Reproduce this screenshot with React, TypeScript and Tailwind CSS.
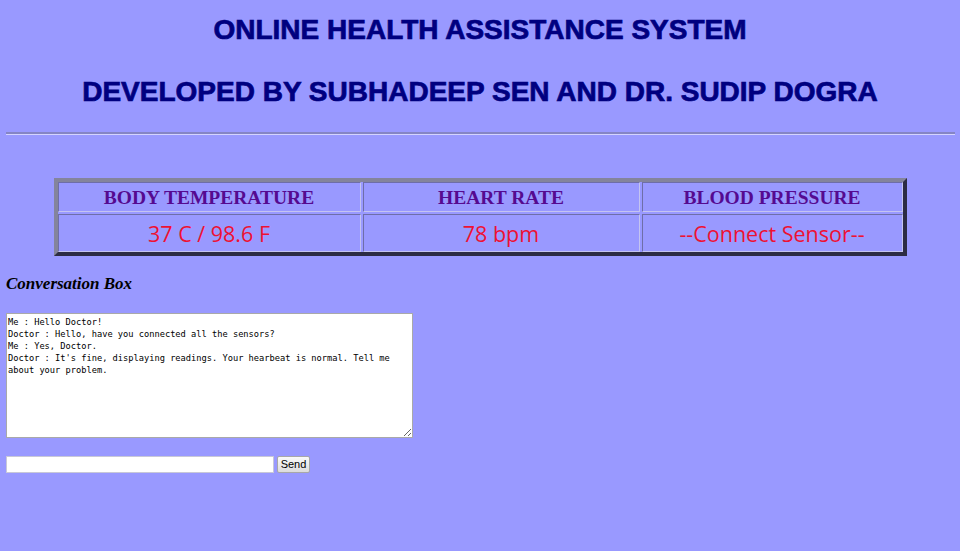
import React from "react";

const convo = `Me : Hello Doctor!
Doctor : Hello, have you connected all the sensors?
Me : Yes, Doctor.
Doctor : It's fine, displaying readings. Your hearbeat is normal. Tell me about your problem.`;

const cellBase =
  "flex items-center justify-center border border-t-[#6e6ea8] border-l-[#6e6ea8] border-b-[#c4c4f0] border-r-[#c4c4f0]";

export default function App() {
  return (
    <div className="min-h-[551px] w-[960px] bg-[#9999ff] px-[6px] overflow-hidden">
      <div
        className="pt-[14px] text-center text-[28px] leading-[32px] font-bold text-[#000080] [-webkit-text-stroke:0.7px_#000080]"
        style={{ fontFamily: '"Liberation Sans", Arial, sans-serif' }}
      >
        <div>ONLINE HEALTH ASSISTANCE SYSTEM</div>
        <div className="mt-[30px]">DEVELOPED BY SUBHADEEP SEN AND DR. SUDIP DOGRA</div>
      </div>
      <div className="mt-[24px] mr-[-1px] h-[3px] border-t-2 border-b border-t-[#8585c4] border-b-[#d4d4ff]" />

      <div className="mt-[43px] mx-auto w-[853px] border-4 border-t-[#84849c] border-l-[#84849c] border-b-[#2c2c44] border-r-[#2c2c44] p-0">
        <div className="grid grid-cols-[303px_277px_261px] gap-[2px]">
          {["BODY TEMPERATURE", "HEART RATE", "BLOOD PRESSURE"].map((h) => (
            <div
              key={h}
              className={`${cellBase} h-[30px] pt-[1px] text-[19.5px] font-bold text-[#550a90]`}
              style={{ fontFamily: '"Liberation Serif", "Times New Roman", serif' }}
            >
              {h}
            </div>
          ))}
          {["37 C / 98.6 F", "78 bpm", "--Connect Sensor--"].map((v) => (
            <div
              key={v}
              className={`${cellBase} h-[38px] pt-[3px] text-[21.5px] text-[#ee1133]`}
              style={{ fontFamily: '"Open Sans", "Noto Sans", sans-serif' }}
            >
              {v}
            </div>
          ))}
        </div>
      </div>

      <div
        className="mt-[18px] text-[17px] leading-[20px] font-bold italic text-black"
        style={{ fontFamily: '"Liberation Serif", "Times New Roman", serif' }}
      >
        Conversation Box
      </div>

      <textarea
        readOnly
        defaultValue={convo}
        className="mt-[19px] block w-[407px] h-[125px] bg-white border border-[#a9a9a9] px-[1px] py-[2px] text-[8.7px] leading-[12px] text-black resize-y outline-none"
        style={{ fontFamily: '"DejaVu Sans Mono", "Liberation Mono", monospace' }}
      />

      <div className="mt-[18px] flex items-center gap-[3px]">
        <input
          type="text"
          className="w-[268px] h-[17px] bg-white border border-[#c8c8d8] outline-none"
        />
        <button
          className="h-[17px] w-[33px] bg-gradient-to-b from-[#fafafa] to-[#dcdcdc] border border-[#a8a8a8] rounded-[2px] text-[11px] leading-[15px] text-black"
          style={{ fontFamily: '"Liberation Sans", Arial, sans-serif' }}
        >
          Send
        </button>
      </div>
    </div>
  );
}
